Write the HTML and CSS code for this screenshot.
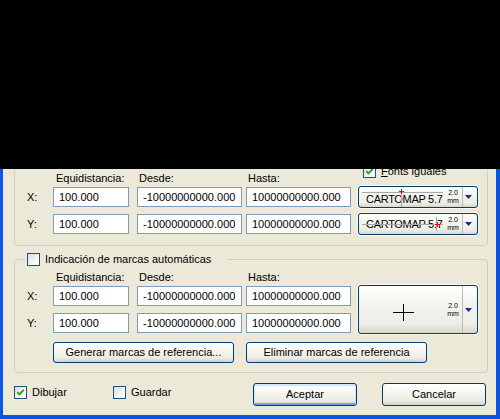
FILE: index.html
```html
<!DOCTYPE html>
<html lang="es">
<head>
<meta charset="utf-8">
<title>Marcas de referencia</title>
<link rel="stylesheet" href="styles.css">
</head>
<body>
<div class="window">
  <fieldset class="group g1">
    <div class="hdr">
      <span></span>
      <span class="lbl l1">Equidistancia:</span>
      <span class="lbl">Desde:</span>
      <span class="lbl">Hasta:</span>
      <label class="chk fonts"><span class="box"><svg viewBox="0 0 11 11" width="11" height="11"><polyline points="2.3,5.2 4.4,7.4 8.8,2.8" fill="none" stroke="#21A121" stroke-width="1.9"/></svg></span><span><u>F</u>onts iguales</span></label>
    </div>
    <div class="grid">
      <span class="axis">X:</span>
      <div class="inp w1">100.000</div>
      <div class="inp w2">-10000000000.000</div>
      <div class="inp w2">10000000000.000</div>
      <div class="combo top">
        <div class="prev">
          <span class="ftxt">CARTOMAP 5.7</span>
          <span class="size"><span class="sl">2.0</span><span class="sl">mm</span></span>
          <svg class="marks" width="86" height="20" viewBox="0 0 86 20"><path d="M3 5.5H84M42.5 5V20" stroke="#A8A8A8" stroke-width="1" fill="none"/><path d="M40 4.5H45M42.5 2V7" stroke="#FF0000" stroke-width="1" fill="none"/></svg>
        </div>
        <div class="drop"><svg width="7" height="4" viewBox="0 0 7 4"><path d="M0 0H7L3.5 4Z" fill="#1B2B8C"/></svg></div>
      </div>
      <span class="axis">Y:</span>
      <div class="inp w1">100.000</div>
      <div class="inp w2">-10000000000.000</div>
      <div class="inp w2">10000000000.000</div>
      <div class="combo">
        <div class="prev">
          <span class="ftxt">CARTOMAP 5.7</span>
          <span class="size"><span class="sl">2.0</span><span class="sl">mm</span></span>
          <svg class="marks" width="86" height="20" viewBox="0 0 86 20"><path d="M3 10.5H84M77.5 3V17" stroke="#A8A8A8" stroke-width="1" fill="none"/><path d="M76 10.5H81M78.5 8V13" stroke="#FF0000" stroke-width="1" fill="none"/></svg>
        </div>
        <div class="drop"><svg width="7" height="4" viewBox="0 0 7 4"><path d="M0 0H7L3.5 4Z" fill="#1B2B8C"/></svg></div>
      </div>
    </div>
  </fieldset>

  <fieldset class="group g2">
    <legend class="lg"><label class="chk"><span class="box"></span><span>Indicación de marcas automáticas</span></label></legend>
    <div class="hdr">
      <span></span>
      <span class="lbl l1">Equidistancia:</span>
      <span class="lbl">Desde:</span>
      <span class="lbl">Hasta:</span>
      <span></span>
    </div>
    <div class="grid">
      <span class="axis">X:</span>
      <div class="inp w1">100.000</div>
      <div class="inp w2">-10000000000.000</div>
      <div class="inp w2">10000000000.000</div>
      <div class="combo big">
        <div class="prev">
          <span class="cross"><svg width="21" height="17" viewBox="0 0 21 17"><path d="M0 8.5H21M10.5 0V17" stroke="#000" stroke-width="1" fill="none"/></svg></span>
          <span class="size"><span class="sl">2.0</span><span class="sl">mm</span></span>
        </div>
        <div class="drop"><svg width="7" height="4" viewBox="0 0 7 4"><path d="M0 0H7L3.5 4Z" fill="#1B2B8C"/></svg></div>
      </div>
      <span class="axis">Y:</span>
      <div class="inp w1">100.000</div>
      <div class="inp w2">-10000000000.000</div>
      <div class="inp w2">10000000000.000</div>
    </div>
    <div class="actions">
      <button class="btn wide">Generar marcas de referencia...</button>
      <button class="btn wide">Eliminar marcas de referencia</button>
    </div>
  </fieldset>

  <div class="footer">
    <label class="chk dib"><span class="box"><svg viewBox="0 0 11 11" width="11" height="11"><polyline points="2.3,5.2 4.4,7.4 8.8,2.8" fill="none" stroke="#21A121" stroke-width="1.9"/></svg></span><span>Dibujar</span></label>
    <label class="chk"><span class="box"></span><span>Guardar</span></label>
    <button class="btn dlg default">Aceptar</button>
    <button class="btn dlg cancel">Cancelar</button>
  </div>
</div>
<div class="blackout"></div>
</body>
</html>
```

FILE: styles.css
```css
body {
  margin: 0;
  width: 500px;
  height: 419px;
  position: relative;
  overflow: hidden;
  background: #000;
  font-family: "Liberation Sans", Arial, sans-serif;
  font-size: 11px;
  color: #000;
}

.blackout {
  position: absolute;
  left: 0;
  top: 0;
  width: 500px;
  height: 169px;
  background: #000;
}

.window {
  box-sizing: border-box;
  width: 500px;
  height: 419px;
  background: #ECE9D8;
  border-left: 3px solid #0A55E6;
  border-right: 4px solid #0A55E6;
  border-bottom: 4px solid #0A55E6;
  padding: 150px 8px 0 11px;
}

.group {
  margin: 0;
  padding: 0;
  min-width: 0;
  border: 1px solid #D0D0BF;
  border-radius: 4px;
}

.g1 {
  padding: 14px 0 11px;
}

.g2 {
  margin-top: 7px;
  padding: 0 0 9px;
}

.lg {
  margin-left: 10px;
  padding: 0 16px 0 2px;
  line-height: 13px;
}

.hdr,
.grid {
  display: grid;
  grid-template-columns: 26px 84px 109px 112px 120px;
  margin-left: 12px;
}

.hdr {
  align-items: end;
}

.g1 .hdr { height: 22px; }
.g2 .hdr { height: 20px; }

.lbl {
  line-height: 13px;
  padding: 0 0 2px 2px;
}

.lbl.l1 { padding-left: 3px; }

.fonts {
  align-self: start;
  margin-left: 5px;
}

.grid {
  grid-template-rows: 20px 20px;
  row-gap: 7px;
}

.axis {
  line-height: 20px;
}

.inp {
  box-sizing: border-box;
  height: 20px;
  border: 1px solid #7F9DB9;
  background: #fff;
  padding-left: 5px;
  line-height: 18px;
  white-space: nowrap;
  overflow: hidden;
}

.w1 { width: 76px; }
.w2 { width: 105px; }

/* combo (font / mark selector) */
.combo {
  box-sizing: border-box;
  width: 120px;
  height: 22px;
  margin-top: -1px;
  border: 1px solid #003C74;
  border-radius: 3px;
  background: linear-gradient(#FFFFFF, #F4F4F0 35%, #EEEDE7 80%, #D9D5CA);
  box-shadow: 0 0 0 1px #F8F7F3;
  display: flex;
}

.combo.big {
  grid-column: 5;
  grid-row: 1 / span 2;
  height: 49px;
}

.prev {
  flex: 1;
  display: flex;
  align-items: center;
  position: relative;
}

.ftxt {
  flex: 1;
  padding-left: 7px;
  line-height: 13px;
  white-space: nowrap;
  letter-spacing: -0.3px;
}

.top .ftxt {
  padding-top: 5px;
}

.size {
  width: 14px;
  padding-right: 2px;
  font-size: 7px;
  display: flex;
  flex-direction: column;
  align-items: center;
}

.sl {
  display: block;
  height: 8px;
  line-height: 8px;
}

.marks {
  position: absolute;
  left: 0;
  top: 0;
}

.cross {
  flex: 1;
  display: flex;
  justify-content: center;
  padding-top: 6px;
  padding-left: 2px;
}

.drop {
  width: 15px;
  border-left: 1px solid #BDBAAE;
  display: flex;
  align-items: center;
  justify-content: center;
  padding-right: 3px;
  box-sizing: border-box;
}

/* checkboxes */
.chk {
  display: flex;
  align-items: center;
  line-height: 13px;
  white-space: nowrap;
}

.box {
  box-sizing: border-box;
  width: 13px;
  height: 13px;
  flex: none;
  margin-right: 5px;
  border: 1px solid #1C5180;
  background: linear-gradient(135deg, #DCDCD7, #FFFFFF 85%);
}

.box svg {
  display: block;
}

/* buttons */
.btn {
  box-sizing: border-box;
  padding: 0;
  margin: 0;
  font: inherit;
  color: #000;
  border: 1px solid #003C74;
  border-radius: 3px;
  background: linear-gradient(#FFFFFF, #F5F4EF 45%, #ECEAE3 80%, #D6D0C5);
  text-align: center;
}

.actions {
  display: flex;
  gap: 12px;
  margin: 9px 0 0 38px;
}

.btn.wide {
  width: 181px;
  height: 21px;
  line-height: 19px;
}

.footer {
  display: flex;
  align-items: flex-start;
  margin-top: 10px;
  height: 23px;
  padding-right: 2px;
}

.footer .chk {
  margin-top: 3px;
}

.dib {
  width: 99px;
}

.btn.dlg {
  width: 104px;
  height: 23px;
  line-height: 21px;
}

.default {
  margin-left: auto;
  box-shadow: inset 0 1px 0 1px #CEE7FF, inset 0 -1px 0 1px #7A9DEB;
}

.cancel {
  margin-left: 25px;
}
```
